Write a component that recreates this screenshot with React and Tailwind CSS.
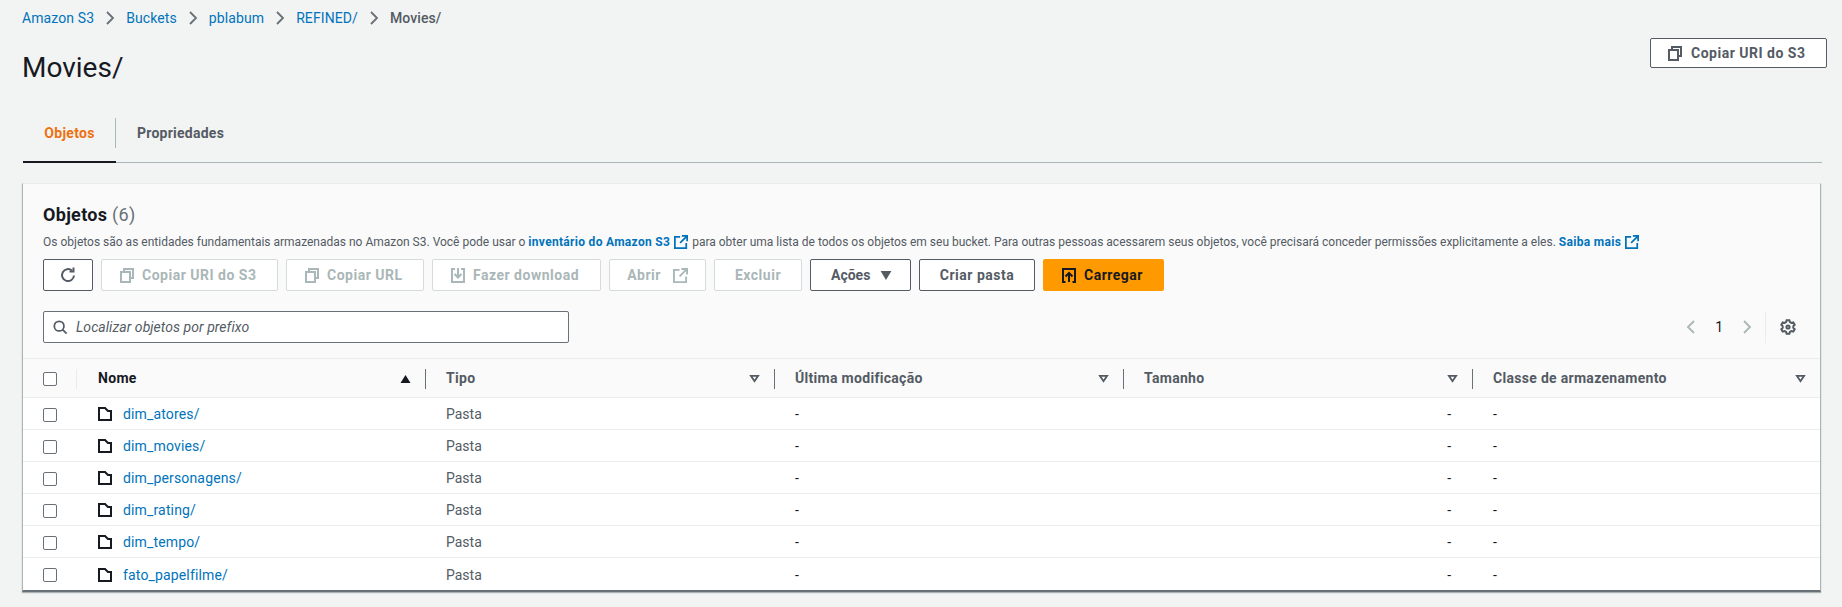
import React from "react";

const rows = ["dim_atores/", "dim_movies/", "dim_personagens/", "dim_rating/", "dim_tempo/", "fato_papelfilme/"];

function Icon({ className, children }) {
  return (
    <svg viewBox="0 0 16 16" fill="none" stroke="currentColor" strokeWidth="2" className={className}>
      {children}
    </svg>
  );
}

const CopyIcon = () => (
  <Icon className="w-4 h-4 shrink-0">
    <rect x="2" y="5" width="9" height="10" />
    <path d="M5 5V2h9v9h-3" />
  </Icon>
);

const ExternalIcon = ({ className }) => (
  <Icon className={className}>
    <path d="M7 2H1v13h13V9" />
    <path d="M9 1h6v6M15 1L7 9" />
  </Icon>
);

const FolderIcon = () => (
  <svg viewBox="0 0 14 14" fill="none" stroke="#16191f" strokeWidth="2" className="w-[14px] h-[14px] shrink-0 -mt-px">
    <path d="M1 13V1h6l3 3h3v9z" />
  </svg>
);

const FilterCaret = () => (
  <svg viewBox="0 0 12 10" fill="none" stroke="#545b64" strokeWidth="2" className="w-[11px] h-[9px]">
    <path d="M2 2h8L6 8z" />
  </svg>
);

const Divider = ({ light }) => <div className={`w-px h-5 ${light ? "bg-[#eaeded]" : "bg-[#687078]"}`} />;

function ActionButton({ disabled, className = "", children }) {
  return (
    <button
      type="button"
      className={`h-8 flex items-center rounded-[2px] border text-[14px] font-bold tracking-[0.5px] bg-white ${
        disabled ? "border-[#d5dbdb] text-[#aab7b8]" : "border-[#545b64] text-[#545b64]"
      } ${className}`}
    >
      {children}
    </button>
  );
}

function HeaderCell({ label, first, last }) {
  return (
    <div className="flex items-center h-full">
      <div className="flex items-center justify-between flex-1 pl-5 pr-[14px]">
        <span className={`text-[14px] font-bold tracking-[0.3px] ${first ? "text-[#16191f]" : "text-[#545b64]"}`}>{label}</span>
        {first ? (
          <svg viewBox="0 0 10 8" className="w-[11px] h-[8px] fill-[#16191f]">
            <path d="M5 0l5 8H0z" />
          </svg>
        ) : (
          <FilterCaret />
        )}
      </div>
      {!last && <Divider />}
    </div>
  );
}

export default function App() {
  return (
    <div className="min-h-screen bg-[#f2f3f3] pb-4 text-[#16191f] font-['Roboto','Liberation_Sans',sans-serif]">
      <div className="relative pl-[22px] pr-[20px]">
        <nav className="flex items-center h-9 text-[14px] tracking-[0.1px]">
          {["Amazon S3", "Buckets", "pblabum", "REFINED/"].map((b) => (
            <React.Fragment key={b}>
              <a className="text-[#0073bb]">{b}</a>
              <svg viewBox="0 0 10 16" fill="none" stroke="#687078" strokeWidth="1.8" className="w-[10px] h-[16px] mx-[11px]">
                <path d="M2 2l6 6-6 6" />
              </svg>
            </React.Fragment>
          ))}
          <span className="font-medium text-[#545b64]">Movies/</span>
        </nav>

        <div className="flex items-start justify-between h-[70px]">
          <h1 className="text-[28px] leading-[36px] mt-[14px] font-normal">Movies/</h1>
          <ActionButton className="w-[177px] h-[30px] mt-[2px] mr-[-5px] pl-4 gap-2">
            <CopyIcon />
            <span>Copiar URI do S3</span>
          </ActionButton>
        </div>

        <div className="flex h-[57px] ml-px border-b border-[#aab7b8] items-stretch">
          <div className="relative w-[93px] mt-[12px] pt-[5px] flex justify-center text-[14px] leading-[20px] font-bold text-[#ec7211] tracking-[0.3px] border-b-2 border-[#16191f] mb-[-1px]">
            Objetos
            <div className="absolute right-0 top-0 h-[30px] w-px bg-[#aab7b8]" />
          </div>
          <div className="mt-[12px] pt-[5px] pl-[21px] text-[14px] leading-[20px] font-bold text-[#545b64] tracking-[0.25px]">Propriedades</div>
        </div>

        <div className="mt-[20px] border-x border-[#aab7b8] border-t-[#eaeded] border-t border-b-2 border-b-[#687078] bg-white shadow-[0_1px_1px_rgba(0,28,36,0.3)] w-[1799px]">
          <div className="bg-[#fafafa] h-[175px] px-5 pt-[20px] border-b border-[#eaeded]">
            <h2 className="text-[18px] leading-[20px] mt-px font-bold tracking-[0.3px]">
              Objetos <span className="font-normal text-[#687078]">(6)</span>
            </h2>
            <p className="mt-[7px] flex items-center text-[12px] leading-[20px] text-[#545b64] whitespace-nowrap">
              Os objetos são as entidades fundamentais armazenadas no Amazon S3. Você pode usar o&nbsp;
              <a className="font-bold text-[#0073bb] tracking-[0.3px]">inventário do Amazon S3</a>
              <ExternalIcon className="w-[14px] h-[14px] text-[#0073bb] mx-[4px]" />
              para obter uma lista de todos os objetos em seu bucket. Para outras pessoas acessarem seus objetos, você precisará conceder permissões explicitamente a eles.&nbsp;
              <a className="font-bold text-[#0073bb] tracking-[0.3px]">Saiba mais</a>
              <ExternalIcon className="w-[14px] h-[14px] text-[#0073bb] ml-[4px]" />
            </p>

            <div className="mt-[7px] flex gap-2">
              <ActionButton className="w-[50px] justify-center">
                <svg viewBox="0 0 16 16" fill="none" stroke="#545b64" strokeWidth="2" className="w-4 h-4">
                  <path d="M14 8.5a6 6 0 1 1-2-4.9" />
                  <path d="M13.5 0.5v4h-4" />
                </svg>
              </ActionButton>
              <ActionButton disabled className="w-[177px] pl-[17px] gap-[7px]">
                <CopyIcon />
                <span>Copiar URI do S3</span>
              </ActionButton>
              <ActionButton disabled className="w-[138px] pl-[17px] gap-[7px]">
                <CopyIcon />
                <span>Copiar URL</span>
              </ActionButton>
              <ActionButton disabled className="w-[169px] pl-[17px] gap-[7px]">
                <Icon className="w-4 h-4">
                  <path d="M5 2H2v13h12V2h-3" />
                  <path d="M8 1v9M4.500 7L8 10.500 11.500 7" />
                </Icon>
                <span>Fazer download</span>
              </ActionButton>
              <ActionButton disabled className="w-[97px] justify-center gap-2">
                Abrir
                <ExternalIcon className="w-[15px] h-[15px] ml-1" />
              </ActionButton>
              <ActionButton disabled className="w-[88px] justify-center">Excluir</ActionButton>
              <ActionButton className="w-[101px] pl-5">
                <span className="tracking-normal">Ações</span>
                <svg viewBox="0 0 12 10" className="w-[12px] h-[9px] ml-[10px] fill-[#545b64]">
                  <path d="M0 0h12L6 10z" />
                </svg>
              </ActionButton>
              <ActionButton className="w-[116px] justify-center">Criar pasta</ActionButton>
              <button type="button" className="h-8 w-[121px] pl-[18px] flex items-center gap-[7px] rounded-[2px] bg-[#ff9900] text-[14px] font-bold tracking-[0.5px] text-[#16191f]">
                <Icon className="w-4 h-4">
                  <path d="M4.500 15H2V2h12v13h-2.500" />
                  <path d="M8 15V6.500M4.500 9.500L8 6l3.500 3.500" />
                </Icon>
                <span>Carregar</span>
              </button>
            </div>

            <div className="mt-5 flex items-center justify-between">
              <div className="w-[526px] h-8 flex items-center gap-[9px] px-2 bg-white border border-[#687078] rounded-[2px]">
                <svg viewBox="0 0 16 16" fill="none" stroke="#545b64" strokeWidth="2" className="w-[14px] h-[14px] ml-[1px]">
                  <circle cx="7" cy="7" r="5.500" />
                  <path d="M11 11l4.500 4.500" />
                </svg>
                <span className="italic text-[14px] tracking-[0.05px] text-[#545b64]">Localizar objetos por prefixo</span>
              </div>
              <div className="flex items-center h-8">
                <svg viewBox="0 0 10 16" fill="none" stroke="#aab7b8" strokeWidth="1.8" className="w-[10px] h-4">
                  <path d="M8 2L2 8l6 6" />
                </svg>
                <span className="mx-[19px] text-[14px]">1</span>
                <svg viewBox="0 0 10 16" fill="none" stroke="#aab7b8" strokeWidth="1.8" className="w-[10px] h-4">
                  <path d="M2 2l6 6-6 6" />
                </svg>
                <div className="w-px h-8 bg-[#eaeded] ml-[13px] mr-[14px]" />
                <svg viewBox="0 0 16 16" fill="none" stroke="#545b64" strokeWidth="2" className="w-4 h-4 mr-[4px]">
                  <path d="M6.600 1.200h2.800l.5 1.800 1.500.9 1.900-.5 1.400 2.400-1.400 1.300v1.800l1.400 1.300-1.400 2.400-1.900-.5-1.500.9-.5 1.800H6.600l-.5-1.800-1.500-.9-1.900.5-1.400-2.400L2.700 8.900V7.100L1.300 5.800l1.400-2.400 1.900.5 1.500-.9z" />
                  <circle cx="8" cy="8" r="1.600" />
                </svg>
              </div>
            </div>
          </div>

          <div className="grid grid-cols-[55px_348px_349px_349px_349px_347px]">
            <div className="h-[39px] pt-px bg-[#fafafa] border-b border-[#eaeded] col-span-6 grid grid-cols-subgrid items-center">
              <div className="flex items-center justify-between pl-5 pr-px h-full">
                <span className="w-[14px] h-[14px] rounded-[2px] border border-[#687078] bg-white" />
                <Divider light />
              </div>
              <HeaderCell label="Nome" first />
              <HeaderCell label="Tipo" />
              <HeaderCell label="Última modificação" />
              <HeaderCell label="Tamanho" />
              <HeaderCell label="Classe de armazenamento" last />
            </div>
            {rows.map((name, i) => (
              <div
                key={name}
                className={`h-8 pt-[2px] col-span-6 grid grid-cols-subgrid items-center text-[14px] ${i < rows.length - 1 ? "border-b border-[#eaeded]" : ""}`}
              >
                <div className="pl-5 flex">
                  <span className="w-[14px] h-[14px] rounded-[2px] border border-[#687078] bg-white" />
                </div>
                <div className="pl-5 flex items-center gap-[11px]">
                  <FolderIcon />
                  <a className="text-[#0073bb] tracking-[0.15px]">{name}</a>
                </div>
                <div className="pl-5 text-[#545b64]">Pasta</div>
                <div className="pl-5">-</div>
                <div className="pr-[22px] text-right">-</div>
                <div className="pl-5">-</div>
              </div>
            ))}
          </div>
        </div>
      </div>
    </div>
  );
}
